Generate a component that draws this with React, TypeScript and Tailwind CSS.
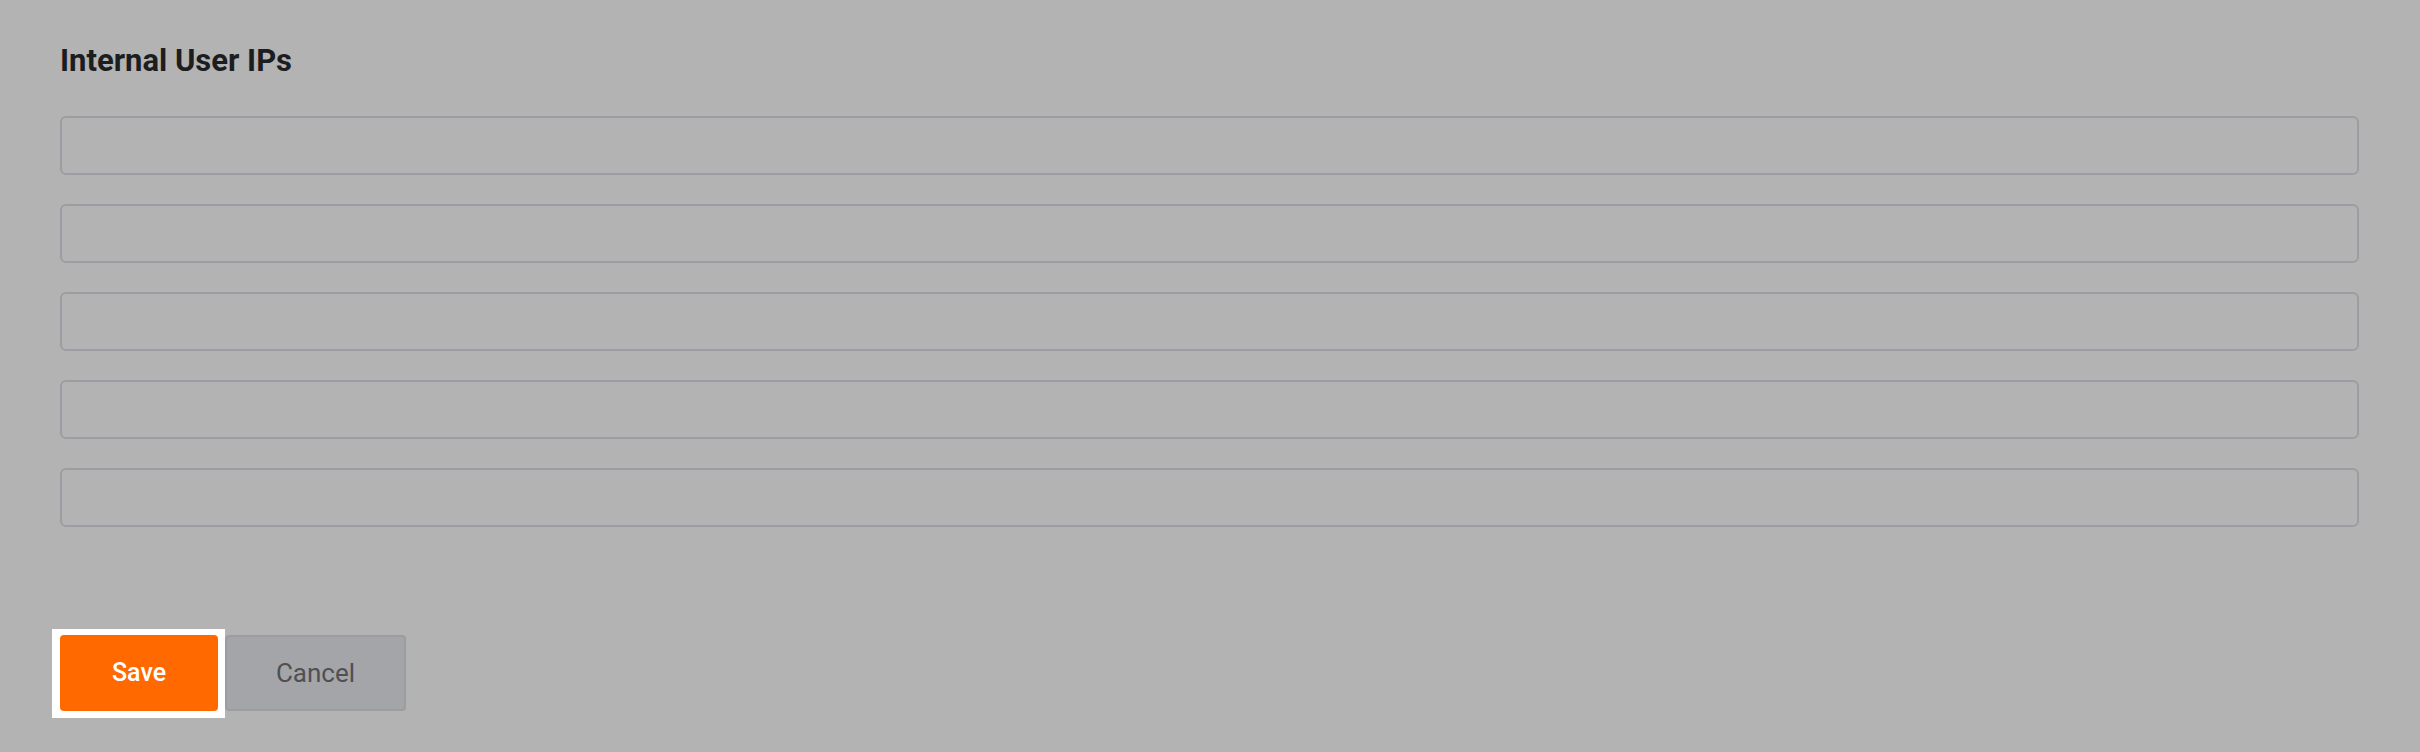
import React from "react";

export default function App() {
  const fields = [0, 1, 2, 3, 4];
  return (
    <div
      className="min-h-[752px] w-full bg-[#b3b3b3] pl-[60px] pr-[61px] pt-[43px]"
      style={{ fontFamily: "Roboto, 'Liberation Sans', sans-serif" }}
    >
      <h2 className="text-[31px] leading-[36px] font-bold text-[#1c1d20]">
        Internal User IPs
      </h2>
      <div className="mt-[37px] flex flex-col gap-[29px]">
        {fields.map((i) => (
          <input
            key={i}
            type="text"
            className="h-[59px] w-full rounded-[6px] border-2 border-[#9a9da2] bg-transparent px-4 text-[26px] outline-none"
          />
        ))}
      </div>
      <div className="-ml-[8px] mt-[102px] flex items-start">
        {/* focus ring around save */}
        <div className="bg-white pl-[8px] pt-[6px] pr-[7px] pb-[7px]">
          <button className="block h-[76px] w-[158px] rounded-[4px] bg-[#ff6900] text-[25px] font-medium text-white">
            Save
          </button>
        </div>
        <button className="mt-[6px] h-[76px] w-[181px] rounded-[4px] border-2 border-[#9c9da1] bg-[#a4a5a8] text-[26px] text-[#4f5054]">
          Cancel
        </button>
      </div>
    </div>
  );
}
